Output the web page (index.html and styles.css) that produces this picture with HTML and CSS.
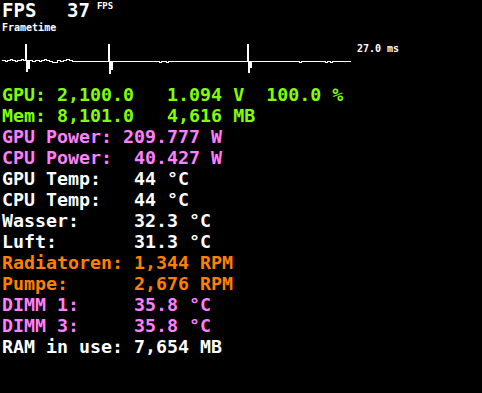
FILE: index.html
```html
<!DOCTYPE html>
<html lang="en">
<head>
    <meta charset="UTF-8">
    <title>OSD</title>
    <link rel="stylesheet" href="styles.css">
</head>
<body>
    <div class="osd">
        <div class="fps-row">
            <span class="fps-label">FPS</span>
            <span class="fps-value">37</span>
            <span class="fps-unit">FPS</span>
        </div>
        <div class="frametime-title">Frametime</div>
        <div class="graph-row">
            <svg class="graph" width="352" height="46" viewBox="0 0 352 46">
                <polyline fill="none" stroke="#fff" stroke-width="1" shape-rendering="crispEdges"
                    points="2,22.5 5,22.5 5,23.5 7,23.5 7,22.5 10,22.5 10,21.5 12,21.5 12,22.5 15,22.5 15,23.5 17,23.5 17,22.5 21,22.5 21,21.5 23,21.5 23,22.5 25.5,22.5 25.5,6 26.5,6 26.5,33 27.5,33 27.5,22.5 28.5,22.5 28.5,30 29.5,30 29.5,22.5 32,22.5 32,23.5 35,23.5 35,22.5 39,22.5 39,23.5 41,23.5 41,22.5 44,22.5 44,21.5 46,21.5 46,22.5 49,22.5 49,23.5 52,23.5 52,24.5 57,24.5 57,22.5 60,22.5 60,23.5 63,23.5 63,22.5 66,22.5 66,21.5 69,21.5 69,22.5 72,22.5 72,23.5 108.5,23.5 108.5,6 109.5,6 109.5,35 110.5,35 110.5,23.5 111.5,23.5 111.5,31 112.5,31 112.5,23.5 159,23.5 159,24.5 161,24.5 161,23.5 166,23.5 166,24.5 168,24.5 168,23.5 247.5,23.5 247.5,6 248.5,6 248.5,34 249.5,34 249.5,23.5 250.5,23.5 250.5,29 251.5,29 251.5,23.5 299,23.5 299,24.5 301,24.5 301,23.5 325,23.5 325,24.5 327,24.5 327,23.5 330,23.5 330,24.5 332,24.5 332,23.5 351,23.5"/>
            </svg>
            <span class="graph-max">27.0 ms</span>
        </div>
        <div class="stats">
            <div class="line green">GPU: 2,100.0   1.094 V  100.0 %</div>
            <div class="line green">Mem: 8,101.0   4,616 MB</div>
            <div class="line pink">GPU Power: 209.777 W</div>
            <div class="line pink">CPU Power:  40.427 W</div>
            <div class="line white">GPU Temp:   44 °C</div>
            <div class="line white">CPU Temp:   44 °C</div>
            <div class="line white">Wasser:     32.3 °C</div>
            <div class="line white">Luft:       31.3 °C</div>
            <div class="line orange">Radiatoren: 1,344 RPM</div>
            <div class="line orange">Pumpe:      2,676 RPM</div>
            <div class="line pink">DIMM 1:     35.8 °C</div>
            <div class="line pink">DIMM 3:     35.8 °C</div>
            <div class="line white">RAM in use: 7,654 MB</div>
        </div>
    </div>
</body>
</html>
```

FILE: styles.css
```css
body {
    margin: 0;
    padding: 0;
    background-color: #000;
    color: #fff;
    font-family: "DejaVu Sans Mono", "Liberation Mono", monospace;
}
.osd {
    padding-left: 2px;
}
.fps-row {
    display: flex;
    align-items: flex-start;
    height: 20px;
    font-weight: bold;
}
.fps-label {
    font-size: 19px;
    line-height: 20px;
    width: 65px;
}
.fps-value {
    font-size: 19px;
    line-height: 20px;
}
.fps-unit {
    font-size: 9px;
    line-height: 10px;
    margin-left: 7px;
    margin-top: 1px;
}
.frametime-title {
    font-size: 10px;
    line-height: 12px;
    font-weight: bold;
    margin-top: 2px;
}
.graph-row {
    display: flex;
    align-items: flex-start;
    margin-top: 4px;
    margin-left: -2px;
}
.graph {
    display: block;
}
.graph-max {
    font-size: 10px;
    line-height: 12px;
    font-weight: bold;
    padding-top: 5px;
    margin-left: 5px;
}
.stats {
    font-size: 18.3px;
    line-height: 21px;
    font-weight: bold;
}
.line {
    white-space: pre;
}
.green { color: #80ff00; }
.pink { color: #ff80ff; }
.white { color: #fff; }
.orange { color: #ff8000; }
```
